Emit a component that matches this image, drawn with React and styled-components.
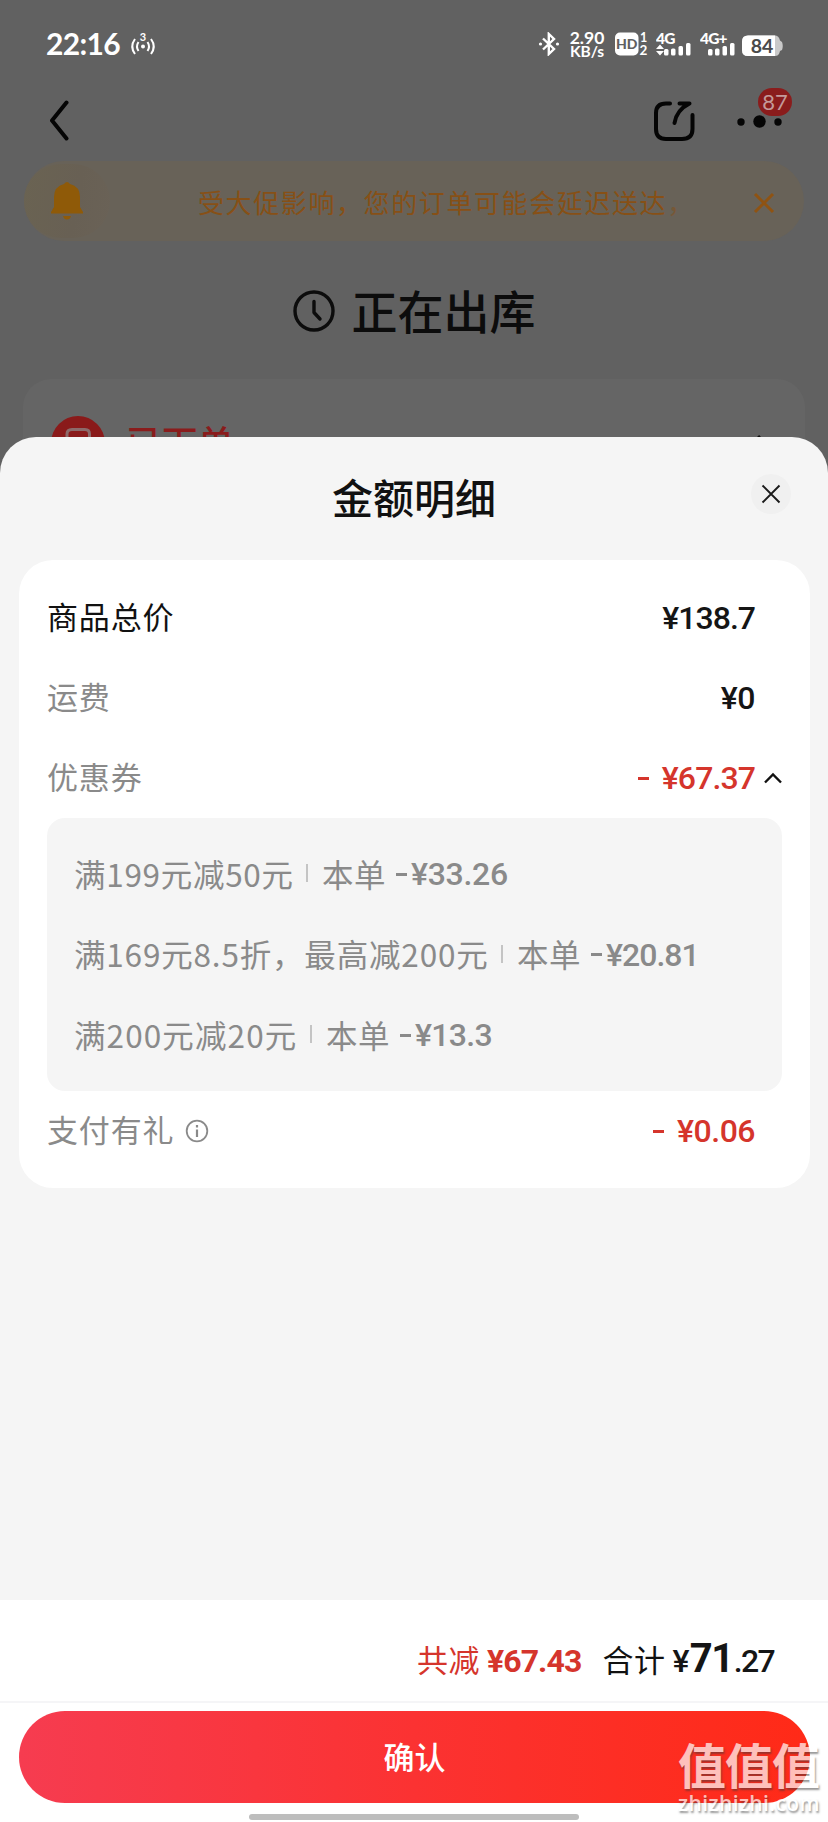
import React from 'react'
import styled, { createGlobalStyle } from 'styled-components'

const GlobalStyle = createGlobalStyle`
  * {
    box-sizing: border-box;
  }
  body {
    margin: 0;
    background: #f5f5f5;
    font-family: "Noto Sans CJK SC", sans-serif;
    color: #111;
  }
`;

const Screen = styled.div`
  position: relative;
  width: 828px;
  height: 1822px;
  overflow: hidden;
  display: flex;
  flex-direction: column;
`;

/* dimmed order page */
const Behind = styled.div`
  height: 480px;
  flex: none;
  overflow: hidden;
  background: #616161;
  display: flex;
  flex-direction: column;
`;

const StatusBar = styled.div`
  height: 88px;
  flex: none;
  padding: 0 44px 0 46px;
  display: flex;
  align-items: center;
  color: #fff;
  font-family: Lato, sans-serif;
  font-weight: 700;
`;

const Time = styled.span`
  font-size: 30px;
  line-height: 36px;
  width: 74px;
  letter-spacing: -0.7px;
  margin-right: 10px;
  margin-bottom: 3px;
`;

const StatusIcons = styled.div`
  margin-left: auto;
  display: flex;
  align-items: center;
`;

const Speed = styled.div`
  width: 38px;
  margin: 0 9px 0 8px;
  font-size: 17.5px;
  line-height: 15px;
  text-align: center;
  small {
    display: block;
    font-size: 15.5px;
    line-height: 13px;
  }
`;

const Nav = styled.div`
  height: 73px;
  flex: none;
  padding: 0 35px 3px 49px;
  display: flex;
  align-items: center;
`;

const NavRight = styled.div`
  margin-left: auto;
  display: flex;
  align-items: center;
  gap: 42px;
`;

const More = styled.div`
  position: relative;
  width: 56px;
  height: 40px;
`;

const Badge = styled.span`
  position: absolute;
  left: 21px;
  top: -15px;
  width: 34px;
  height: 28px;
  border-radius: 14px;
  background: #8a1c1c;
  color: #c49a9a;
  font: 400 22px/28px Lato, sans-serif;
  text-align: center;
`;

const Notice = styled.div`
  height: 80px;
  flex: none;
  margin: 0 24px;
  padding-top: 4px;
  border-radius: 40px;
  background: #686258;
  display: flex;
  align-items: center;
  color: #875016;
`;

const BellWrap = styled.div`
  width: 86px;
  height: 74px;
  margin-top: -4px;
  border-radius: 38px;
  background: linear-gradient(100deg, #6a6352, #686054 60%, #6a6257);
  display: flex;
  align-items: center;
  justify-content: center;
`;

const NoticeText = styled.span`
  margin-left: 88px;
  width: 480px;
  font-size: 26px;
  letter-spacing: 1.6px;
  line-height: 38px;
  margin-bottom: 2px;
  white-space: nowrap;
  i {
    font-style: normal;
    opacity: 0.5;
  }
`;

const StateTitle = styled.div`
  height: 138px;
  flex: none;
  padding-bottom: 2px;
  display: flex;
  align-items: center;
  justify-content: center;
  gap: 17px;
  font-size: 46px;
  line-height: 60px;
  font-weight: 500;
  color: #0c0c0c;
  svg {
    margin-top: 3px;
  }
`;

const StepCard = styled.div`
  margin: 0 23px;
  height: 130px;
  flex: none;
  border-radius: 28px;
  background: #656565;
  padding: 37px 34px 0 28px;
  display: flex;
  align-items: flex-start;
`;

const StepName = styled.span`
  margin: -2px 0 0 21px;
  font-size: 35.5px;
  line-height: 54px;
  letter-spacing: 0.5px;
  font-weight: 500;
  color: #8a1c1c;
`;

const Sheet = styled.div`
  position: relative;
  margin-top: -43px;
  flex: 1;
  border-radius: 36px 36px 0 0;
  background: #f5f5f5;
  display: flex;
  flex-direction: column;
`;

const SheetHeader = styled.div`
  height: 123px;
  flex: none;
  padding: 0 37px 9px;
  display: grid;
  grid-template-columns: 40px 1fr 40px;
  align-items: center;
`;

const SheetTitle = styled.h2`
  grid-column: 2;
  margin: 3px 0 0;
  text-align: center;
  font-size: 41px;
  line-height: 56px;
  font-weight: 500;
`;

const CloseButton = styled.button`
  width: 40px;
  height: 40px;
  padding: 0;
  border: 0;
  border-radius: 50%;
  background: #f0f0f0;
  display: flex;
  align-items: center;
  justify-content: center;
`;

const Card = styled.div`
  margin: 0 18px 0 19px;
  height: 628px;
  padding: 18px 28px 0;
  border-radius: 34px;
  background: #fff;
`;

const Row = styled.div`
  height: 80px;
  display: flex;
  align-items: center;
`;

const Label = styled.span`
  font-size: 31px;
  line-height: 44px;
  letter-spacing: 0.85px;
  margin-bottom: 4px;
  color: ${(p) => (p.$dark ? '#111' : '#8a8a8a')};
`;

const Price = styled.span`
  font-family: Roboto, sans-serif;
  font-weight: 500;
  font-size: 32px;
  line-height: 40px;
  letter-spacing: ${(p) => p.$ls || -0.5}px;
  white-space: pre;
  color: ${(p) => p.$color || '#151515'};
`;

const Amount = styled.div`
  margin-left: auto;
  margin-right: 27px;
  display: flex;
  align-items: center;
`;

const Minus = styled.span`
  width: 11px;
  height: 3px;
  margin-right: ${(p) => p.$gap || 0}px;
  background: ${(p) => p.$color};
`;

const Toggle = styled.span`
  width: 27px;
  margin-left: -27px;
  display: flex;
  justify-content: flex-end;
`;

const CouponBox = styled.div`
  height: 273px;
  padding: 16px 27px 0;
  border-radius: 18px;
  background: #f5f5f5;
`;

const CouponRow = styled.div`
  height: 80.5px;
  display: flex;
  align-items: center;
  color: #8a8a8a;
`;

const Rule = styled.span`
  width: ${(p) => p.$w}px;
  font-size: 31.5px;
  line-height: 44px;
  letter-spacing: ${(p) => p.$ls}px;
  margin-bottom: 3px;
  white-space: nowrap;
`;

const Divider = styled.span`
  width: 2px;
  height: 18px;
  margin: 0 14px 2px 14px;
  background: #c4c4c4;
`;

const Footer = styled.div`
  margin-top: auto;
  height: 222px;
  background: #fff;
`;

const Totals = styled.div`
  height: 103px;
  padding: 0 54px 0 0;
  border-bottom: 2px solid #f5f5f7;
  display: flex;
  align-items: baseline;
  justify-content: flex-end;
  line-height: 117px;
`;

const TotalLabel = styled.span`
  font-size: 31px;
  letter-spacing: 0.5px;
  margin-right: 7px;
  color: ${(p) => p.$color || '#111'};
`;

const TotalPrice = styled(Price)`
  line-height: 40px;
  font-weight: ${(p) => p.$weight || 500};
  margin-right: ${(p) => p.$mr || 0}px;
  big {
    font-size: 40px;
    font-weight: 700;
    letter-spacing: -1.4px;
    margin: 0 1px 0 2px;
  }
`;

const Confirm = styled.button`
  display: block;
  width: 791px;
  height: 92px;
  margin: 8px 0 0 19px;
  padding: 0 0 2px;
  border: 0;
  border-radius: 46px;
  background: linear-gradient(90deg, #f63c50, #fb3232 50%, #ff2a17);
  color: #fff;
  font-family: inherit;
  font-size: 31px;
  font-weight: 500;
  line-height: 44px;
`;

const HomeBar = styled.div`
  width: 330px;
  height: 6px;
  margin: 11px auto 0;
  border-radius: 3px;
  background: #bdbdbd;
`;

const Watermark = styled.div`
  position: absolute;
  right: 8px;
  bottom: 6px;
  width: 142px;
  color: #fff;
  opacity: 0.7;
  text-shadow: 1px 2px 2px rgba(60, 60, 60, 0.75);
  white-space: nowrap;
  b {
    display: block;
    font-size: 48px;
    line-height: 54px;
    font-weight: 700;
    letter-spacing: -1px;
  }
  span {
    display: block;
    font: 600 21px/26px "Open Sans", sans-serif;
    letter-spacing: 0.4px;
  }
`;

const red = '#d5352c';

const coupons = [
  { rule: '满199元减50元', w: 218, ls: 0.7, amount: '¥33.26', amountLs: -0.3 },
  { rule: '满169元8.5折，最高减200元', w: 413, ls: 0.82, amount: '¥20.81', amountLs: -1 },
  { rule: '满200元减20元', w: 222, ls: 1.1, amount: '¥13.3', amountLs: -0.7 },
];

const Hotspot = () => (
  <svg width="26" height="24" viewBox="0 0 26 24" fill="none" stroke="#fff" strokeWidth="2" overflow="visible">
    <text x="13" y="9" fontSize="11" textAnchor="middle" fill="#fff" stroke="none">3</text>
    <circle cx="13" cy="14.5" r="2" fill="#fff" stroke="none" />
    <path d="M8.500 10q-3 4.500 0 9M17.500 10q3 4.500 0 9M5 7q-5.500 7.500 0 15M21 7q5.500 7.500 0 15" />
  </svg>
)

const Bluetooth = () => (
  <svg width="22" height="24" viewBox="0 0 22 24" fill="none" stroke="#fff" strokeWidth="2.400">
    <path d="M5 6.500l11 10.500-5.200 5V2l5.200 5L5 17.500" />
    <circle cx="2.500" cy="12" r="1.600" fill="#fff" stroke="none" />
    <circle cx="19.500" cy="12" r="1.600" fill="#fff" stroke="none" />
  </svg>
)

const Hd = () => (
  <svg width="34" height="28" viewBox="0 0 34 28" fill="#fff">
    <rect x="0" y="2.500" width="23.500" height="23" rx="5" />
    <text x="11.700" y="19.300" fontSize="14" fontWeight="900" textAnchor="middle" fill="#616161">HD</text>
    <text x="28.500" y="11.500" fontSize="12.500" textAnchor="middle">1</text>
    <text x="28.500" y="25" fontSize="13.500" textAnchor="middle">2</text>
  </svg>
)

const Signal = ({ label, arrows }) => (
  <svg width="37" height="28" viewBox="0 0 37 28" fill="#fff">
    <text x="0" y="13.500" fontSize="15.500" letterSpacing="-0.800" fontWeight="900">{label}</text>
    {arrows && <path d="M4 14.500l4 4.500H0zM4 25.500l4-4.500H0z" />}
    <rect x="8" y="19" width="4.500" height="6.500" rx="1.500" />
    <rect x="15" y="18.500" width="4.500" height="7" rx="1.500" />
    <rect x="22.500" y="16" width="4.500" height="9.500" rx="1.500" />
    <rect x="30" y="13" width="4.500" height="12.500" rx="1.500" />
  </svg>
)

const Battery = () => (
  <svg width="42" height="22" viewBox="0 0 42 22" style={{ marginTop: 3 }}>
    <path d="M6 .5h26c4 0 5 1.500 6 5l2 1.500q1.500 4 0 8l-2 1c-1 4-2 5-6 5H6q-6 0-6-6V6.500Q0 .5 6 .5z" fill="#c9c9c9" />
    <path d="M6 .5h27v20.500H6q-6 0-6-6V6.500Q0 .5 6 .5z" fill="#fff" />
    <text x="20" y="17.500" fontSize="19.500" textAnchor="middle" fill="#4a4a4a">84</text>
  </svg>
)

const App = () => {
  return (
    <Screen>
      <GlobalStyle />
      <Behind>
        <StatusBar>
          <Time>22:16</Time>
          <Hotspot />
          <StatusIcons>
            <Bluetooth />
            <Speed>2.90<small>KB/s</small></Speed>
            <Hd />
            <svg width="7" height="1" />
            <Signal label="4G" arrows />
            <svg width="7" height="1" />
            <Signal label="4G+" />
            <svg width="5" height="1" />
            <Battery />
          </StatusIcons>
        </StatusBar>

        <Nav>
          <svg width="20" height="46" viewBox="0 0 20 46" fill="none" stroke="#050505" strokeWidth="4" strokeLinecap="round" strokeLinejoin="round">
            <path d="M17.500 2.500L3 20.500L17.500 38.500" />
          </svg>
          <NavRight>
            <svg width="42" height="46" viewBox="0 0 42 46" fill="none" stroke="#050505" strokeWidth="4" strokeLinecap="round" strokeLinejoin="round">
              <path d="M17 3.500H13Q3 3.500 3 13V29Q3 39 13 39H29Q39.500 39 39.500 29V15M26.500 3.500H36.500Q23.500 10 21.500 23" />
            </svg>
            <More>
              <svg width="56" height="40" fill="#050505">
                <circle cx="4" cy="19" r="3.700" />
                <circle cx="22.500" cy="18.500" r="6.200" />
                <circle cx="41" cy="19" r="3.700" />
              </svg>
              <Badge>87</Badge>
            </More>
          </NavRight>
        </Nav>

        <Notice>
          <BellWrap>
            <svg width="34" height="40" viewBox="0 0 34 40" fill="#8f5a08">
              <path d="M14 3q3-4 6 0 10 2.500 10 13v10l3 5v1.500H1V31l3-5V16Q4 5.500 14 3zM13 35h8q-1 3.500-4 3.500T13 35z" />
            </svg>
          </BellWrap>
          <NoticeText>受大促影响，您的订单可能会延迟送达<i>，</i></NoticeText>
          <svg width="22" height="22" viewBox="0 0 22 22" stroke="#8f5312" strokeWidth="3" style={{ marginLeft: 75 }}>
            <path d="M2 2L20 20M20 2L2 20" />
          </svg>
        </Notice>

        <StateTitle>
          <svg width="42" height="42" viewBox="0 0 42 42" fill="none" stroke="#0c0c0c" strokeWidth="3.400" strokeLinecap="round" strokeLinejoin="round">
            <circle cx="21" cy="21" r="19" />
            <path d="M21 11.500V22.500L27 29" />
          </svg>
          正在出库
        </StateTitle>

        <StepCard>
          <svg width="54" height="54" viewBox="0 0 54 54" fill="none">
            <circle cx="27" cy="27" r="27" fill="#8a1a1a" />
            <path d="M16 36V18Q16 13.500 21 13.500H34Q38.500 13.500 38.500 18V36" stroke="#8c6a6a" strokeWidth="3" />
          </svg>
          <StepName>已下单</StepName>
          <svg width="14" height="30" viewBox="0 0 14 30" fill="none" stroke="#111" strokeWidth="3" style={{ margin: '19px 0 0 auto' }}>
            <path d="M1 1L12 13L1 25" />
          </svg>
        </StepCard>
      </Behind>

      <Sheet>
        <SheetHeader>
          <SheetTitle>金额明细</SheetTitle>
          <CloseButton>
            <svg width="20" height="20" viewBox="0 0 20 20" stroke="#1a1a1a" strokeWidth="1.900">
              <path d="M1.500 1.500L18.500 18.500M18.500 1.500L1.500 18.500" />
            </svg>
          </CloseButton>
        </SheetHeader>

        <Card>
          <Row>
            <Label $dark>商品总价</Label>
            <Amount><Price $ls={-1}>¥138.7</Price></Amount>
          </Row>
          <Row>
            <Label>运费</Label>
            <Amount><Price>¥0</Price></Amount>
          </Row>
          <Row>
            <Label>优惠券</Label>
            <Amount>
              <Minus $color={red} $gap={13} />
              <Price $color={red} $ls={-0.9}>¥67.37</Price>
            </Amount>
            <Toggle>
              <svg width="18" height="12" viewBox="0 0 18 12" fill="none" stroke="#111" strokeWidth="2.400">
                <path d="M1 10.500L9 2.500L17 10.500" />
              </svg>
            </Toggle>
          </Row>
          <CouponBox>
            {coupons.map((c) => (
              <CouponRow key={c.amount}>
                <Rule $w={c.w} $ls={c.ls}>{c.rule}</Rule>
                <Divider />
                <Rule $w={74} $ls={0.6}>本单</Rule>
                <Minus $color="#8a8a8a" $gap={4} />
                <Price $color="#8a8a8a" $ls={c.amountLs}>{c.amount}</Price>
              </CouponRow>
            ))}
          </CouponBox>
          <Row>
            <Label>支付有礼</Label>
            <svg width="24" height="24" viewBox="0 0 24 24" fill="none" stroke="#8a8a8a" strokeWidth="1.800" style={{ marginLeft: 11 }}>
              <circle cx="12" cy="12" r="10.300" />
              <path d="M12 10.500V18M12 6V8.500" strokeWidth="2.200" />
            </svg>
            <Amount>
              <Minus $color={red} $gap={13} />
              <Price $color={red}>¥0.06</Price>
            </Amount>
          </Row>
        </Card>

        <Footer>
          <Totals>
            <TotalLabel $color={red}>共减</TotalLabel>
            <TotalPrice $color={red} $weight={700} $mr={21} $ls={-0.9}>¥67.43</TotalPrice>
            <TotalLabel>合计</TotalLabel>
            <TotalPrice $ls={-1.7}>¥<big>71</big>.27</TotalPrice>
          </Totals>
          <Confirm>确认</Confirm>
          <HomeBar />
        </Footer>
      </Sheet>

      <Watermark>
        <b>值值值</b>
        <span>zhizhizhi.com</span>
      </Watermark>
    </Screen>
  )
}

export default App
